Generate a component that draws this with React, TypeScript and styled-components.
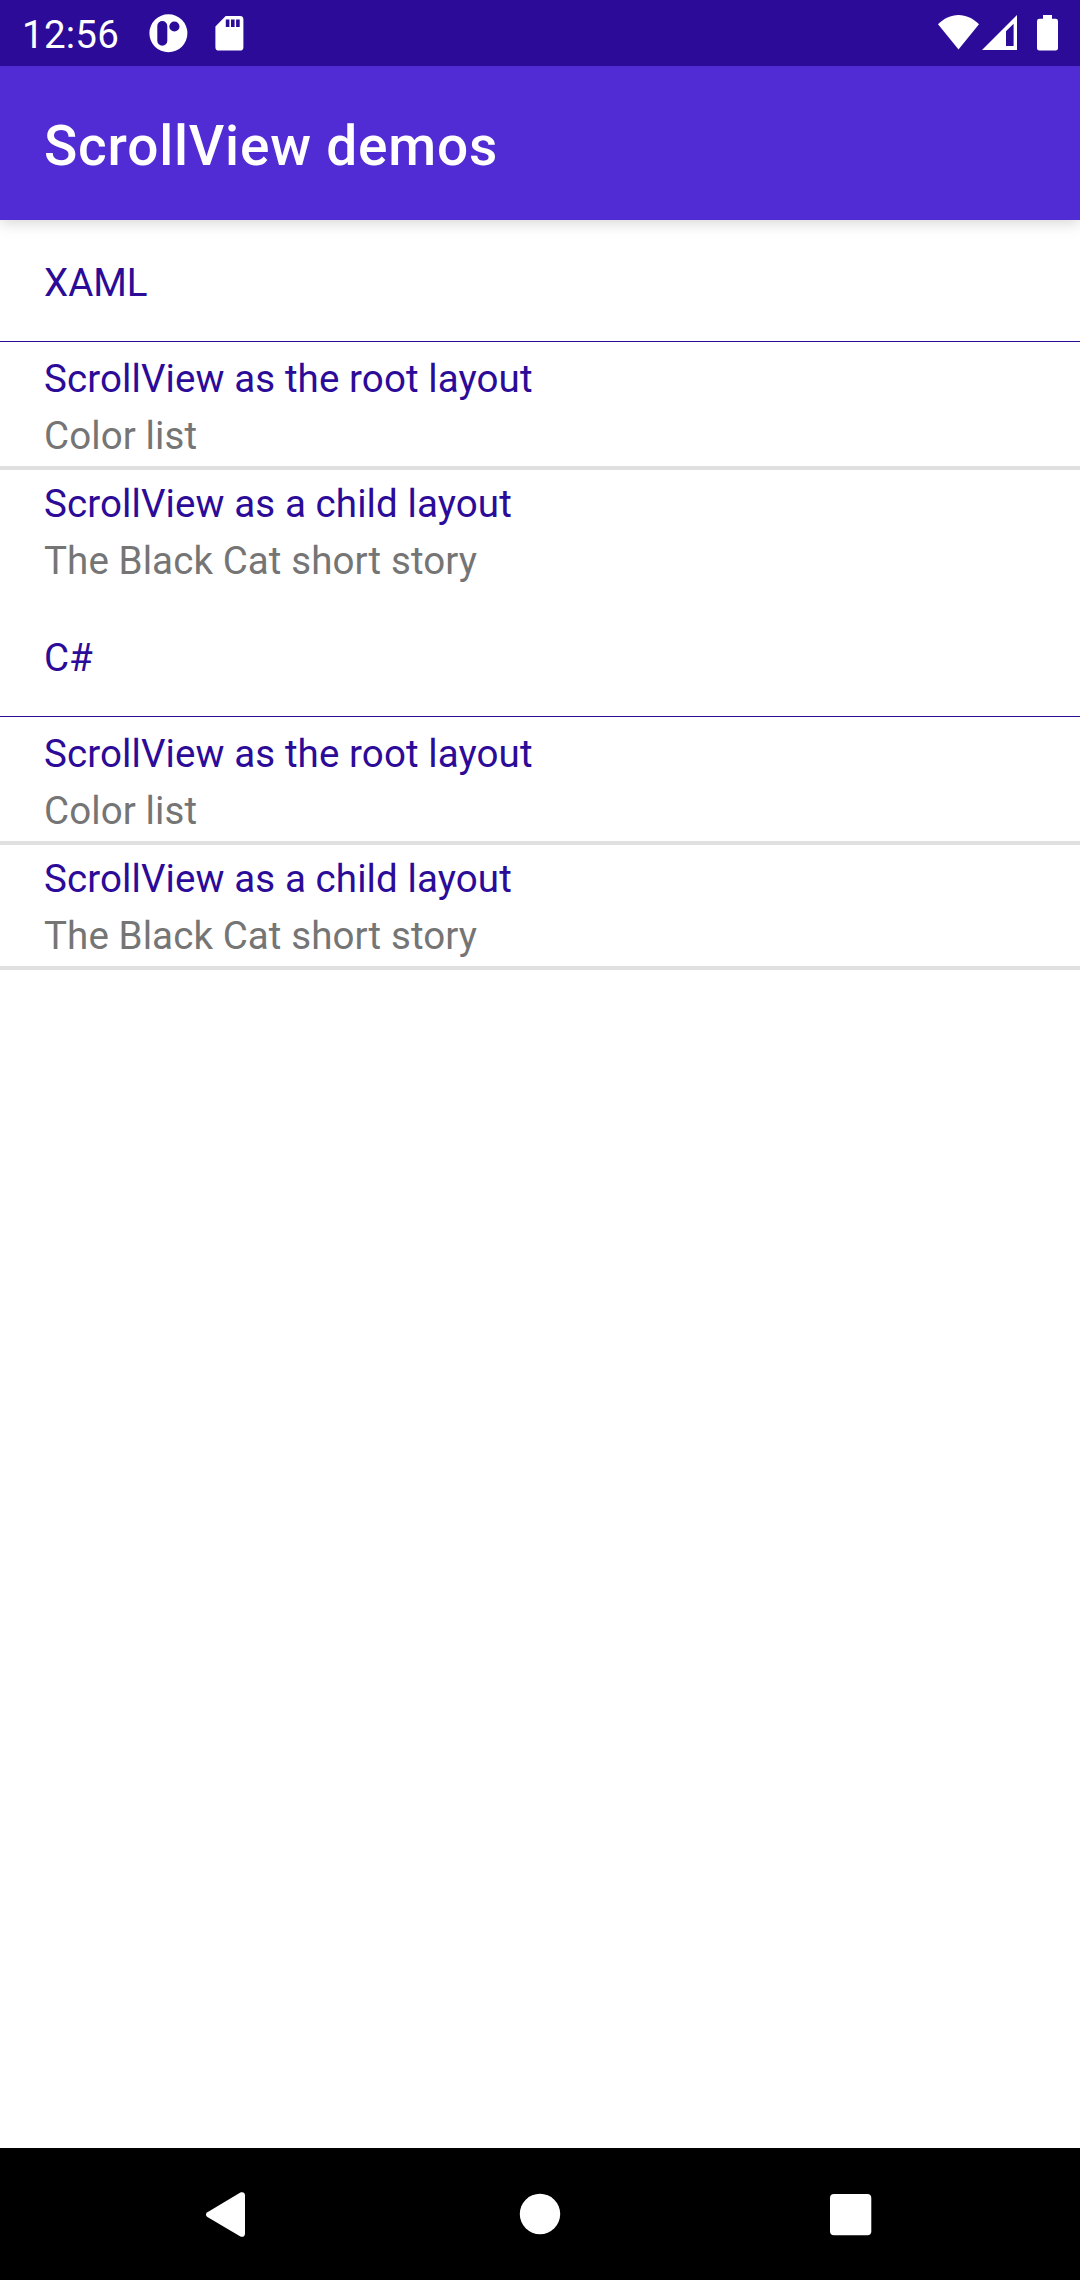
import React from 'react';
import styled, { createGlobalStyle, css } from 'styled-components';

const INDIGO = '#2b0b98';

const GlobalStyle = createGlobalStyle`
  body {
    margin: 0;
    background: #ffffff;
  }
`;

const Screen = styled.div`
  display: flex;
  flex-direction: column;
  width: 1080px;
  height: 2280px;
  overflow: hidden;
  background: #ffffff;
  font-family: Roboto, 'Liberation Sans', sans-serif;
`;

const StatusBar = styled.header`
  display: flex;
  align-items: center;
  justify-content: space-between;
  flex: none;
  z-index: 2;
  height: 66px;
  padding: 0 20px 0 22px;
  box-sizing: border-box;
  background: ${INDIGO};
  color: #ffffff;
`;

const StatusGroup = styled.div<{ $gap: number }>`
  display: flex;
  align-items: center;
  gap: ${({ $gap }) => $gap}px;

  svg {
    display: block;
  }
`;

const Clock = styled.time`
  width: 97px;
  padding-top: 4px;
  font-size: 38.5px;
  line-height: 46px;
  letter-spacing: 0.25px;
  white-space: nowrap;
`;

const AppBar = styled.div`
  display: flex;
  align-items: center;
  flex: none;
  height: 154px;
  padding: 5px 44px 0;
  box-sizing: border-box;
  background: #512bd4;
  box-shadow: 0 3px 14px rgba(0, 0, 0, 0.17);
  z-index: 1;
`;

const AppTitle = styled.h1`
  margin: 0;
  color: #ffffff;
  font-size: 55px;
  font-weight: 500;
  line-height: 64px;
  letter-spacing: 0.8px;
  white-space: nowrap;
`;

const Content = styled.main`
  flex: 1;
`;

const Section = styled.section`
  display: flex;
  flex-direction: column;
`;

const SectionHeader = styled.h2`
  display: flex;
  align-items: center;
  height: 122px;
  margin: 0 0 3px;
  padding: 5px 44px 0;
  box-sizing: border-box;
  border-bottom: 1px solid ${INDIGO};
  color: ${INDIGO};
  font-size: 38.5px;
  font-weight: 400;
  line-height: 46px;
`;

const Row = styled.div<{ $divider: boolean }>`
  height: 125px;
  padding: 5px 44px 0;
  box-sizing: border-box;
  border-bottom: 4px solid ${({ $divider }) => ($divider ? '#e0e0e0' : 'transparent')};
`;

const rowText = css`
  font-size: 38.5px;
  line-height: 57px;
  letter-spacing: 0.1px;
  white-space: nowrap;
`;

const RowTitle = styled.div`
  ${rowText}
  color: ${INDIGO};
`;

const RowDetail = styled.div`
  ${rowText}
  color: #757575;
`;

const NavBar = styled.nav`
  display: flex;
  justify-content: center;
  flex: none;
  height: 132px;
  background: #000000;
`;

const NavButton = styled.button`
  display: flex;
  align-items: center;
  justify-content: center;
  width: 310px;
  padding: 0;
  border: 0;
  background: transparent;
`;

const AppGlyph = () => (
  <svg width="40" height="40" viewBox="148 13 40 40">
    <path
      fill="#fff"
      fillRule="evenodd"
      d="M168.4 14.2a19 19 0 1 1 0 38a19 19 0 1 1 0-38zM162.3 21a5 5 0 0 0-5 5v14.7a5 5 0 0 0 10 0V26a5 5 0 0 0-5-5zM174.4 21.4a5.1 5.1 0 1 0 0 10.2a5.1 5.1 0 1 0 0-10.2z"
    />
  </svg>
);

const SdCardGlyph = () => (
  <svg width="30" height="40" viewBox="214 13 30 40">
    <path
      fill="#fff"
      fillRule="evenodd"
      d="M225.7 16H240a3.4 3.4 0 0 1 3.4 3.4v27.8a3.4 3.4 0 0 1-3.4 3.4H218.8a3.4 3.4 0 0 1-3.4-3.4V26.4zM225.8 19.4v7.6h3.6v-7.6zM231 19.4v7.6h3.6v-7.6zM236.1 19.4v7.6h3.6v-7.6z"
    />
  </svg>
);

const WifiGlyph = () => (
  <svg width="42" height="40" viewBox="938 13 42 40">
    <path fill="#fff" d="M958.5 49.6L938 24.2C943.6 18.6 951 15 958.5 15S973.4 18.6 979 24.2z" />
  </svg>
);

const SignalGlyph = () => (
  <svg width="36" height="40" viewBox="982 13 36 40">
    <path fill="#fff" fillRule="evenodd" d="M982 50L1017 15V50zM1006 31.3V46H1013.6V23.7z" />
  </svg>
);

const BatteryGlyph = () => (
  <svg width="23" height="40" viewBox="1037 13 23 40">
    <path
      fill="#fff"
      d="M1043 15h9v3.8h3.6a2.4 2.4 0 0 1 2.4 2.4v27a2.4 2.4 0 0 1-2.4 2.4h-16.2a2.4 2.4 0 0 1-2.4-2.4v-27a2.4 2.4 0 0 1 2.4-2.4h3.6z"
    />
  </svg>
);

const BackGlyph = () => (
  <svg width="60" height="60" viewBox="200 2184 60 60">
    <path
      fill="#fff"
      d="M245 2195.3V2233.7C245 2236.4 242.6 2237.6 240.4 2236.4L207.4 2217C205.5 2215.8 205.5 2213.4 207.4 2212.2L240.4 2192.6C242.6 2191.4 245 2192.6 245 2195.3z"
    />
  </svg>
);

const HomeGlyph = () => (
  <svg width="60" height="60" viewBox="510 2184 60 60">
    <circle cx="540" cy="2214" r="20.2" fill="#fff" />
  </svg>
);

const RecentsGlyph = () => (
  <svg width="60" height="60" viewBox="820 2184 60 60">
    <rect x="830" y="2194" width="41.3" height="41.3" rx="4" fill="#fff" />
  </svg>
);

const pages = [
  { title: 'ScrollView as the root layout', detail: 'Color list' },
  { title: 'ScrollView as a child layout', detail: 'The Black Cat short story' },
];

const sections = [
  { name: 'XAML', closed: false },
  { name: 'C#', closed: true },
];

export default function App() {
  return (
    <>
      <GlobalStyle />
      <Screen>
        <StatusBar>
          <StatusGroup $gap={29}>
            <Clock>12:56</Clock>
            <StatusGroup $gap={26}>
              <AppGlyph />
              <SdCardGlyph />
            </StatusGroup>
          </StatusGroup>
          <StatusGroup $gap={19}>
            <StatusGroup $gap={2}>
              <WifiGlyph />
              <SignalGlyph />
            </StatusGroup>
            <BatteryGlyph />
          </StatusGroup>
        </StatusBar>
        <AppBar>
          <AppTitle>ScrollView demos</AppTitle>
        </AppBar>
        <Content>
          {sections.map((section) => (
            <Section key={section.name}>
              <SectionHeader>{section.name}</SectionHeader>
              {pages.map((page, i) => (
                <Row key={page.title} $divider={section.closed || i < pages.length - 1}>
                  <RowTitle>{page.title}</RowTitle>
                  <RowDetail>{page.detail}</RowDetail>
                </Row>
              ))}
            </Section>
          ))}
        </Content>
        <NavBar>
          <NavButton aria-label="Back">
            <BackGlyph />
          </NavButton>
          <NavButton aria-label="Home">
            <HomeGlyph />
          </NavButton>
          <NavButton aria-label="Recents">
            <RecentsGlyph />
          </NavButton>
        </NavBar>
      </Screen>
    </>
  );
}
